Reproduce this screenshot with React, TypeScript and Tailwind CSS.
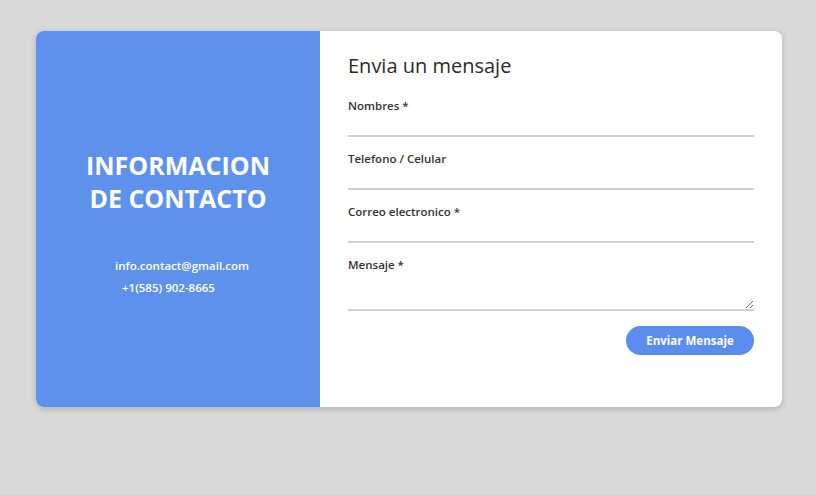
import React from "react";

const FIELDS = [
  { label: "Nombres *", type: "text" },
  { label: "Telefono / Celular", type: "tel" },
  { label: "Correo electronico *", type: "email" },
];

export default function App() {
  return (
    <div
      className="min-h-screen w-full bg-[#d9d9d9] pt-[31px] pl-[36px]"
      style={{ fontFamily: '"Open Sans", "Noto Sans", sans-serif' }}
    >
      <div className="flex w-[746px] h-[376px] rounded-lg overflow-hidden bg-white shadow-[0_2px_6px_rgba(0,0,0,0.18)]">
        {/* Contact info */}
        <div className="w-[284px] bg-[#5e91ec] flex flex-col justify-center text-white pt-[6px]">
          <h2 className="text-[25px] leading-[33px] font-bold text-center">
            INFORMACION
            <br />
            DE CONTACTO
          </h2>
          <div className="mt-[42px] flex flex-col gap-[5px] text-[11.5px] leading-[17px] font-semibold">
            <span className="pl-[79px]">info.contact@gmail.com</span>
            <span className="pl-[86px]">+1(585) 902-8665</span>
          </div>
        </div>

        {/* Form */}
        <form className="flex-1 px-[28px] pt-[21px]" onSubmit={(e) => e.preventDefault()}>
          <h3 className="text-[20px] leading-[28px] text-[#2b2b2b] mb-[17px]">Envia un mensaje</h3>
          {FIELDS.map((f) => (
            <div key={f.label} className="mb-[13px]">
              <label className="block text-[11.5px] leading-[17px] font-semibold text-[#333]">{f.label}</label>
              <input
                type={f.type}
                className="block w-full h-[23px] border-b-2 border-[#d0d0d0] outline-none bg-transparent"
              />
            </div>
          ))}
          <div>
            <label className="block text-[11.5px] leading-[17px] font-semibold text-[#333]">Mensaje *</label>
            <textarea className="block w-full h-[38px] border-b-2 border-[#d0d0d0] outline-none bg-transparent resize-y" />
          </div>
          <div className="flex justify-end mt-[15px]">
            <button
              type="submit"
              className="w-[128px] h-[29px] rounded-full bg-[#5b8def] text-white text-[11.5px] font-bold"
            >
              Enviar Mensaje
            </button>
          </div>
        </form>
      </div>
    </div>
  );
}
